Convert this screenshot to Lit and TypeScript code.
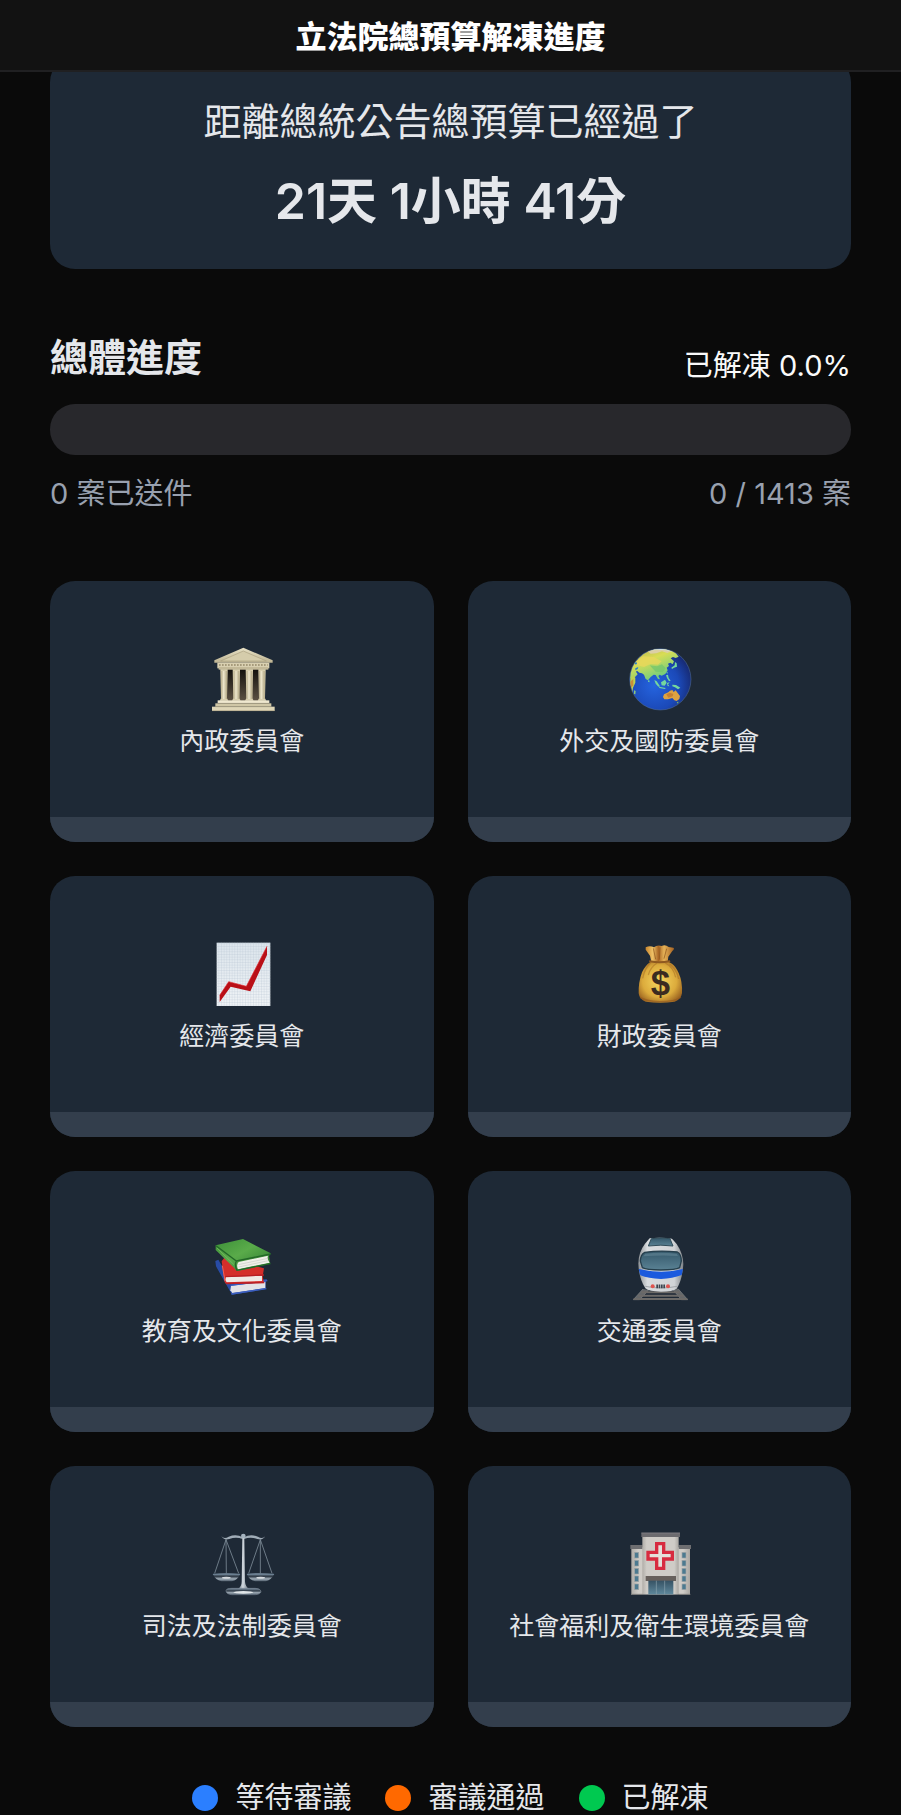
import { LitElement, html, css, svg } from "lit";
import { customElement, property } from "lit/decorators.js";

const templeIcon = svg`
  <svg class="icon" viewBox="31 36 192 192" aria-hidden="true">
    <defs>
      <linearGradient id="stone" x1="0" y1="0" x2="0" y2="1">
        <stop offset="0" stop-color="#e9e2c6" /><stop offset="1" stop-color="#bdb392" />
      </linearGradient>
      <linearGradient id="column" x1="0" y1="0" x2="1" y2="0">
        <stop offset="0" stop-color="#b5aa88" /><stop offset=".4" stop-color="#eee7cd" /><stop offset="1" stop-color="#b1a683" />
      </linearGradient>
      <linearGradient id="hall" x1="0" y1="0" x2="0" y2="1">
        <stop offset="0" stop-color="#14120f" /><stop offset="1" stop-color="#5b5042" />
      </linearGradient>
    </defs>
    <rect x="66" y="100" width="129" height="98" fill="#4a4236" />
    <rect x="80" y="104" width="104" height="92" fill="url(#hall)" />
    <path d="M131 38 219 76V83H44V76Z" fill="url(#stone)" />
    <path d="M131 48 200 78H63Z" fill="#d5ccab" stroke="#aba07f" stroke-width="2" />
    <rect x="53" y="83" width="156" height="17" fill="#d9d0b1" />
    <path d="M58 90H204" stroke="#a69b7b" stroke-width="6" stroke-dasharray="5 4" />
    <rect x="57" y="96" width="149" height="8" fill="#c3b998" />
    <path d="M62 103H84V109L82 190 86 197H60L64 190Z M99 103H121V109L119 190 123 197H97L101 190Z M138 103H160V109L158 190 162 197H136L140 190Z M176 103H198V109L196 190 200 197H174L178 190Z" fill="#d8cfae" />
    <g fill="url(#column)">
      <rect x="65" y="108" width="17" height="84" /><rect x="102" y="108" width="17" height="84" />
      <rect x="141" y="108" width="17" height="84" /><rect x="178" y="108" width="17" height="84" />
    </g>
    <rect x="54" y="196" width="155" height="9" fill="#efe8cf" />
    <rect x="47" y="205" width="168" height="10" fill="#cfc6a6" />
    <rect x="37" y="215" width="188" height="13" fill="#ded5b7" />
    <path d="M54 205H209M47 215H215M37 227H225" stroke="#958b6e" stroke-width="1.5" />
  </svg>`;

const globeIcon = svg`
  <svg class="icon" viewBox="35 36 192 192" aria-hidden="true">
    <defs>
      <radialGradient id="sea" cx=".4" cy=".6" r=".62">
        <stop offset="0" stop-color="#2564df" /><stop offset=".65" stop-color="#1b49b8" /><stop offset="1" stop-color="#172c78" />
      </radialGradient>
      <linearGradient id="land" x1="0" y1="0" x2=".6" y2="1">
        <stop offset="0" stop-color="#b7a850" /><stop offset=".45" stop-color="#d8dd55" /><stop offset="1" stop-color="#62cb83" />
      </linearGradient>
      <clipPath id="globe"><circle cx="135" cy="133" r="91" /></clipPath>
    </defs>
    <circle cx="135" cy="133" r="92" fill="url(#sea)" stroke="#52719a" stroke-width="1.5" />
    <g clip-path="url(#globe)">
      <path d="M50 92 60 66 88 45 118 38 150 40 178 50 190 65 181 69 173 66 166 70 176 79 172 88 165 83 158 86 161 93 154 98 157 106 150 117 139 122 133 119 129 123 134 133 128 132 121 120 115 119 106 126 98 136 91 132 86 119 80 115 72 113 65 107 62 110 67 118 60 125 51 128 42 133V104Z" fill="url(#land)" />
      <path d="M97 49 119 41 149 42 168 49 156 54 140 49 123 55 106 56Z" fill="#dccfa4" />
      <path d="M63 79 83 64 115 66 139 79 128 89 106 87 86 96 66 91Z" fill="#e8d75b" opacity=".8" />
      <path d="M103 91 125 94 140 88 151 100 142 112 121 110Z" fill="#73c66e" opacity=".75" />
      <path d="M45 132 54 119 60 129 60 143 53 158 51 174 42 160Z" fill="#bcd151" />
      <path d="M43 142 54 132 54 151 47 158Z" fill="#c68d3b" />
      <path d="M56 166 61 168 60 178 56 177Z" fill="#8cc57b" />
      <path d="M58 84 63 81 65 86 61 89Z M60 100 69 96 67 102 60 106Z" fill="#247bd1" />
      <g fill="#75d79d">
        <path d="M99 135 103 137 102 142 98 140Z M117 135 124 139 134 154 129 155 121 146Z M137 142 149 134 154 143 148 152 139 151Z M131 155 151 159 149 162 132 159Z M155 144 163 142 158 148 162 154 157 153ZM152 121 158 119 160 129 166 137 161 139 155 129Z M171 149 182 150 195 158 188 163 179 157 171 154Z" />
        <path d="M179 81 184 85 185 95 176 98 170 102 168 98 178 91Z M153 112 157 110 156 117Z" />
      </g>
      <path d="M146 178 159 172 164 167 171 165 175 171 181 166 187 174 194 183 192 192 184 198 177 196 171 189 158 193 147 193 143 186Z" fill="#dda342" />
      <path d="M153 178 164 173 174 177 172 184 159 188Z" fill="#c78032" />
      <path d="M184 201 190 200 187 206Z" fill="#77ba65" />
      <path d="M95 49Q135 31 177 51Q132 38 95 49" fill="#c8e4ff" opacity=".8" />
    </g>
  </svg>`;

const chartIcon = svg`
  <svg class="icon" viewBox="31 36 192 192" aria-hidden="true">
    <defs>
      <linearGradient id="paper" x1="0" y1="0" x2="0" y2="1">
        <stop offset="0" stop-color="#dce5ec" /><stop offset="1" stop-color="#f0f3f6" />
      </linearGradient>
      <pattern id="grid" width="8" height="8" patternUnits="userSpaceOnUse">
        <path d="M8 0H0V8" fill="none" stroke="#b6c4d1" stroke-width="1.5" />
      </pattern>
    </defs>
    <rect x="51" y="38" width="161" height="190" fill="url(#paper)" />
    <rect x="51" y="38" width="161" height="190" fill="url(#grid)" />
    <path d="M60 196 87 155 140 169 202 49V75L152 184 93 170 60 216Z" fill="#b90f17" />
    <path d="M60 196 87 155 140 169 202 49" fill="none" stroke="#df2c30" stroke-width="2" />
  </svg>`;

const moneyIcon = svg`
  <svg class="icon" viewBox="35 36 192 192" aria-hidden="true">
    <defs>
      <radialGradient id="bag" cx=".48" cy=".48" r=".6">
        <stop offset="0" stop-color="#f7d75f" /><stop offset=".65" stop-color="#dcab3c" /><stop offset="1" stop-color="#9b6320" />
      </radialGradient>
      <linearGradient id="neck" x1="0" y1="0" x2="1" y2="0">
        <stop offset="0" stop-color="#c7852d" /><stop offset=".25" stop-color="#efc267" /><stop offset=".45" stop-color="#a96624" />
        <stop offset=".65" stop-color="#e6b257" /><stop offset="1" stop-color="#a46122" />
      </linearGradient>
    </defs>
    <path d="M91 52Q104 45 116 52Q126 43 139 48Q150 43 160 51L174 53Q179 56 171 63L159 80 157 96H108L104 77 91 59Z" fill="url(#neck)" />
    <path d="M114 55 121 88M134 52 132 89M154 56 146 86" stroke="#895019" stroke-width="3" fill="none" opacity=".65" />
    <path d="M108 94H157L170 101Q181 108 190 129Q202 155 200 190Q197 209 178 215Q135 221 91 215Q72 209 70 190Q69 157 80 127Q89 107 108 94Z" fill="url(#bag)" />
    <path d="M107 96Q88 115 82 145M125 99Q105 112 99 135M150 99Q174 111 181 142M163 102Q185 120 190 147" fill="none" stroke="#a56c21" stroke-width="4" opacity=".5" />
    <path d="M104 94Q132 100 162 94" fill="none" stroke="#8f5920" stroke-width="6" stroke-linecap="round" />
    <path d="M74 202Q90 213 133 215 180 215 197 202" fill="none" stroke="#93591f" stroke-width="4" opacity=".6" />
    <text class="coin" x="135" y="196" text-anchor="middle">$</text>
  </svg>`;

const booksIcon = svg`
  <svg class="icon" viewBox="31 36 192 192" aria-hidden="true">
    <defs>
      <linearGradient id="cover" x1="0" y1="0" x2="1" y2="1">
        <stop offset="0" stop-color="#3c9038" /><stop offset=".45" stop-color="#5aab4a" /><stop offset="1" stop-color="#28762d" />
      </linearGradient>
    </defs>
    <path d="M47 108 56 104 98 176 202 162 199 169 198 192 97 209 49 124Z" fill="#284ba5" />
    <path d="M94 182 197 170V189L98 204 92 196Z" fill="#e3e3e6" />
    <path d="M93 181 203 167M95 207 200 191" stroke="#3c5fc0" stroke-width="4" />
    <path d="M66 109 74 98 193 130 189 154 193 174 80 178 75 172Z" fill="#d42e2a" />
    <path d="M79 156 187 152V168L81 172 77 165Z" fill="#f0e9e5" />
    <path d="M77 155 193 150M79 175 194 173" stroke="#b61e24" stroke-width="4" />
    <path d="M68 122 76 168" stroke="#ee625a" stroke-width="3" />
    <path d="M48 61 130 42 213 85 208 93 212 116 114 138Q107 135 103 128L48 75Z" fill="url(#cover)" />
    <path d="M117 111 205 92Q201 104 210 113L115 133Q109 119 117 111Z" fill="#f0f0e9" />
    <path d="M116 119 205 100M117 126 206 107" stroke="#c8cbc4" stroke-width="2" />
    <path d="M49 62 110 108 213 87M110 108Q104 121 112 136L212 116" fill="none" stroke="#236828" stroke-width="4" />
    <path d="M52 69 103 119" stroke="#80bd67" stroke-width="2" />
  </svg>`;

const trainIcon = svg`
  <svg class="icon" viewBox="35 36 192 192" aria-hidden="true">
    <defs>
      <linearGradient id="shell" x1="0" y1="0" x2="1" y2="0">
        <stop offset="0" stop-color="#8d9195" /><stop offset=".2" stop-color="#d9dcdf" /><stop offset=".8" stop-color="#d0d3d6" /><stop offset="1" stop-color="#7f8489" />
      </linearGradient>
      <linearGradient id="glass" x1="0" y1="0" x2="0" y2="1">
        <stop offset="0" stop-color="#34576a" /><stop offset="1" stop-color="#5a8294" />
      </linearGradient>
    </defs>
    <path d="M83 192 54 224H73L100 195M188 191 217 224H198L174 195" fill="#64676a" stroke="#85888a" stroke-width="2" />
    <path d="M78 202H193M68 212H204M55 222H216" stroke="#6c6a68" stroke-width="6" />
    <path d="M103 40Q136 36 170 41L184 57Q203 85 204 117Q201 165 184 191Q173 200 137 200Q101 200 90 190Q71 161 69 116Q69 82 89 56Z" fill="url(#shell)" />
    <path d="M108 41Q136 37 164 41L173 63Q137 58 99 63Z" fill="url(#glass)" stroke="#304c59" stroke-width="3" />
    <path d="M88 82Q135 75 186 81Q197 86 198 108L193 128Q182 135 136 135Q93 135 81 128L75 108Q76 88 88 82Z" fill="url(#glass)" stroke="#263f4d" stroke-width="4" />
    <path d="M90 86Q137 80 184 86L188 93Q137 90 84 94Z" fill="#8bacbb" opacity=".3" />
    <path d="M70 132Q104 140 138 140Q171 140 203 132L199 150Q172 161 137 162Q99 161 75 151Z" fill="#1b5ade" />
    <path d="M90 184Q137 194 185 184" fill="none" stroke="#a1a5a9" stroke-width="3" />
    <circle cx="112" cy="184" r="6" fill="#df5550" /><circle cx="158" cy="184" r="6" fill="#df5550" />
    <path d="M123 184H149" stroke="#3c4650" stroke-width="11" stroke-dasharray="5 2" />
  </svg>`;

const scalesIcon = svg`
  <svg class="icon" viewBox="31 36 192 192" aria-hidden="true">
    <defs>
      <linearGradient id="silver" x1="0" y1="0" x2="1" y2="0">
        <stop offset="0" stop-color="#5e6d7b" /><stop offset=".45" stop-color="#d4dbe1" /><stop offset="1" stop-color="#5d6975" />
      </linearGradient>
      <linearGradient id="dish" x1="0" y1="0" x2="0" y2="1">
        <stop offset="0" stop-color="#8195a7" /><stop offset=".4" stop-color="#303b47" /><stop offset=".7" stop-color="#a3b0bb" /><stop offset="1" stop-color="#4a5866" />
      </linearGradient>
    </defs>
    <path d="M79 59 45 160M79 59 80 160M79 59 117 160M182 59 147 160M182 59 182 160M182 59 217 160" fill="none" stroke="#7d8b98" stroke-width="2.5" />
    <path d="M65 49Q74 58 87 50Q110 41 129 52V57Q109 49 89 57Q73 62 65 49ZM197 49Q188 58 175 50Q152 41 133 52V57Q153 49 173 57Q189 62 197 49Z" fill="#a0acb7" />
    <path d="M128 52H134L136 185Q137 199 149 207H114Q126 199 126 185Z" fill="url(#silver)" />
    <circle cx="131" cy="48" r="7" fill="#a5b3bf" />
    <path d="M39 162Q80 157 122 162Q113 181 97 184H66Q49 182 39 162Z M141 162Q182 157 224 162Q214 181 198 184H167Q150 182 141 162Z" fill="url(#dish)" />
    <path d="M40 163H121M142 163H223" stroke="#6d8194" stroke-width="3" />
    <ellipse cx="80" cy="173" rx="13" ry="3" fill="#d5dade" /><ellipse cx="183" cy="173" rx="13" ry="3" fill="#d5dade" />
    <path d="M79 212Q80 205 97 205H167Q182 206 184 213Q184 223 167 224H96Q79 222 79 212Z" fill="url(#dish)" stroke="#74818e" stroke-width="2" />
    <ellipse cx="131" cy="217" rx="30" ry="4" fill="#e0e5e8" />
  </svg>`;

const hospitalIcon = svg`
  <svg class="icon" viewBox="35 36 192 192" aria-hidden="true">
    <defs>
      <linearGradient id="wall" x1="0" y1="0" x2="1" y2="0">
        <stop offset="0" stop-color="#b0ada8" /><stop offset=".12" stop-color="#cfccc7" /><stop offset=".88" stop-color="#cfccc7" /><stop offset="1" stop-color="#aaa7a2" />
      </linearGradient>
      <linearGradient id="door" x1="0" y1="0" x2="0" y2="1">
        <stop offset="0" stop-color="#365264" /><stop offset="1" stop-color="#5f889c" />
      </linearGradient>
    </defs>
    <rect x="48" y="82" width="176" height="141" fill="url(#wall)" />
    <path d="M45 75H82V87H45ZM190 75H227V87H190Z" fill="#6e6e71" />
    <g fill="#4c7a90" stroke="#a0a4a5" stroke-width="2">
      ${[97, 121, 145, 168, 192].map(
        (y) => svg`<rect x="58" y=${y} width="12" height="17" /><rect x="200" y=${y} width="12" height="17" />`,
      )}
    </g>
    <rect x="81" y="49" width="109" height="174" fill="url(#wall)" />
    <path d="M78 38H194V51H78Z" fill="#6c6b6f" />
    <path d="M78 39H194" stroke="#88878b" stroke-width="2" />
    <path d="M124 71H145V97H171V117H145V145H124V117H98V97H124Z" fill="#e4e0db" stroke="#d72b40" stroke-width="10" />
    <rect x="91" y="168" width="91" height="15" fill="#67605c" />
    <rect x="99" y="182" width="75" height="41" fill="url(#door)" />
    <path d="M123 182V223M148 182V223" stroke="#8ba2ad" stroke-width="2" />
    <path d="M47 223H82M190 223H225" stroke="#858481" stroke-width="3" />
  </svg>`;

const committees = [
  { name: "內政委員會", icon: templeIcon },
  { name: "外交及國防委員會", icon: globeIcon },
  { name: "經濟委員會", icon: chartIcon },
  { name: "財政委員會", icon: moneyIcon },
  { name: "教育及文化委員會", icon: booksIcon },
  { name: "交通委員會", icon: trainIcon },
  { name: "司法及法制委員會", icon: scalesIcon },
  { name: "社會福利及衛生環境委員會", icon: hospitalIcon },
];

@customElement("committee-card")
class CommitteeCard extends LitElement {
  @property() name = "";
  @property({ attribute: false }) icon: unknown;

  static styles = css`
    :host {
      display: block;
      min-width: 0;
    }
    .card {
      display: flex;
      flex-direction: column;
      width: 100%;
      padding: 0;
      border: 0;
      border-radius: 25px;
      overflow: hidden;
      background: #1e2936;
      color: #e5e7eb;
      font: inherit;
      cursor: pointer;
    }
    .body {
      display: flex;
      flex-direction: column;
      align-items: center;
      gap: 13px;
      width: 100%;
      box-sizing: border-box;
      padding: 66px 8px 59px;
    }
    .icon {
      display: block;
      width: 64px;
      height: 64px;
      overflow: visible;
    }
    .coin {
      font: bold 104px "Liberation Sans", sans-serif;
      fill: #3b2b20;
    }
    .label {
      font-size: 25px;
      line-height: 34px;
    }
    .track {
      width: 100%;
      height: 25px;
      background: #333e4c;
    }
  `;

  render() {
    return html`
      <button class="card" type="button">
        <span class="body">${this.icon}<span class="label">${this.name}</span></span>
        <span class="track"></span>
      </button>
    `;
  }
}

@customElement("app-root")
class AppRoot extends LitElement {
  static styles = css`
    :host {
      display: block;
      background: #0a0a0a;
      color: #e5e7eb;
      font-family: Inter, "Noto Sans CJK TC", sans-serif;
    }
    .header {
      position: sticky;
      top: 0;
      z-index: 1;
      padding: 16px 16px 13px;
      border-bottom: 2px solid #202022;
      background: #121212;
      text-align: center;
    }
    .title {
      margin: 0;
      color: #fff;
      font-size: 31px;
      line-height: 41px;
      font-weight: 800;
    }
    .content {
      padding: 0 50px;
    }
    .elapsed {
      margin-top: -15px;
      padding: 35px 34px 34px;
      border-radius: 25px;
      background: #1e2936;
      text-align: center;
    }
    .caption {
      margin: 0 0 17px;
      font-size: 38px;
      line-height: 59px;
    }
    .time {
      margin: 0;
      font-size: 50px;
      line-height: 67px;
      font-weight: 600;
    }
    .overall {
      margin: 59px 0 66px;
      font-size: 29px;
      line-height: 42px;
    }
    .row {
      display: flex;
      justify-content: space-between;
      align-items: flex-end;
    }
    .heading {
      margin: 0;
      font-size: 38px;
      line-height: 59px;
      font-weight: 600;
    }
    .rate {
      color: #fafafa;
    }
    .bar {
      height: 51px;
      margin: 17px 0 18px;
      border-radius: 25px;
      overflow: hidden;
      background: #28282c;
    }
    .fill {
      height: 100%;
      background: #00c950;
    }
    .counts {
      color: #99a1af;
    }
    .grid {
      display: grid;
      grid-template-columns: 1fr 1fr;
      gap: 34px;
    }
    .legend {
      display: flex;
      justify-content: center;
      gap: 34px;
      margin: 54px 0 0;
      padding: 0;
      list-style: none;
      font-size: 29px;
      line-height: 34px;
    }
    .item {
      display: flex;
      align-items: center;
      gap: 17px;
    }
    .dot {
      width: 26px;
      height: 26px;
      border-radius: 50%;
    }
    .waiting {
      background: #2b7fff;
    }
    .passed {
      background: #ff6900;
    }
    .released {
      background: #00c950;
    }
  `;

  private released = 0;
  private submitted = 0;
  private total = 1413;

  render() {
    const rate = ((this.released / this.total) * 100).toFixed(1);
    return html`
      <header class="header"><h1 class="title">立法院總預算解凍進度</h1></header>
      <main class="content">
        <section class="elapsed">
          <p class="caption">距離總統公告總預算已經過了</p>
          <p class="time">21天 1小時 41分</p>
        </section>
        <section class="overall">
          <div class="row">
            <h2 class="heading" id="overall">總體進度</h2>
            <span class="rate">已解凍 ${rate}%</span>
          </div>
          <div class="bar" role="progressbar" aria-labelledby="overall" aria-valuenow=${rate}>
            <div class="fill" style="width: ${rate}%"></div>
          </div>
          <div class="row counts">
            <span>${this.submitted} 案已送件</span>
            <span>${this.released} / ${this.total} 案</span>
          </div>
        </section>
        <section class="grid">
          ${committees.map((c) => html`<committee-card .name=${c.name} .icon=${c.icon}></committee-card>`)}
        </section>
        <ul class="legend">
          <li class="item"><span class="dot waiting"></span>等待審議</li>
          <li class="item"><span class="dot passed"></span>審議通過</li>
          <li class="item"><span class="dot released"></span>已解凍</li>
        </ul>
      </main>
    `;
  }
}
